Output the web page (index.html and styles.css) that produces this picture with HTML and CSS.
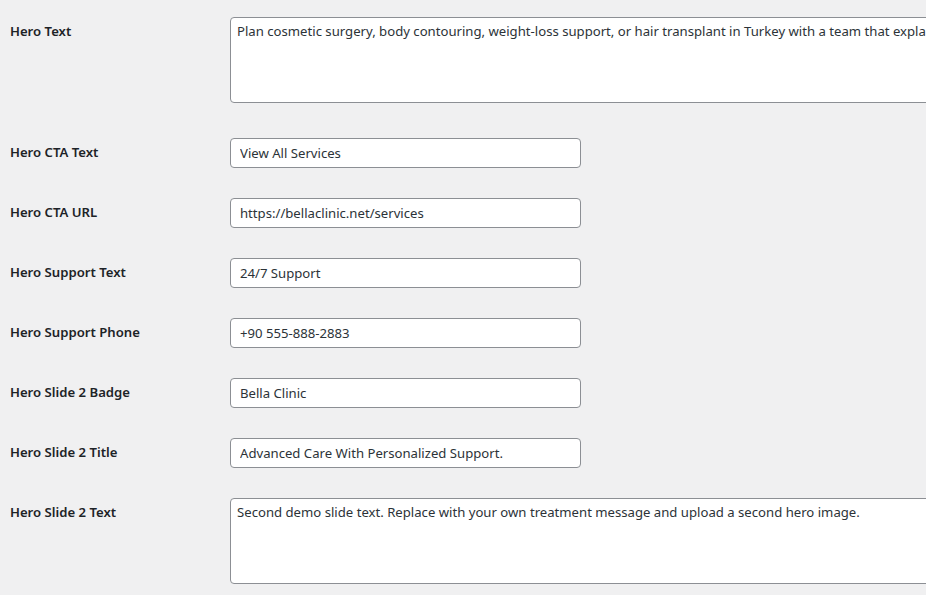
FILE: index.html
```html
<!DOCTYPE html>
<html>
<head>
<meta charset="utf-8">
<link rel="stylesheet" href="styles.css">
</head>
<body>
<div class="form">
  <div class="row row-area">
    <label class="lbl">Hero Text</label>
    <div class="field field-area"><textarea class="area">Plan cosmetic surgery, body contouring, weight-loss support, or hair transplant in Turkey with a team that explains every step clearly.</textarea></div>
  </div>
  <div class="row">
    <label class="lbl">Hero CTA Text</label>
    <div class="field"><input class="txt" type="text" value="View All Services"></div>
  </div>
  <div class="row">
    <label class="lbl">Hero CTA URL</label>
    <div class="field"><input class="txt" type="text" value="https://bellaclinic.net/services"></div>
  </div>
  <div class="row">
    <label class="lbl">Hero Support Text</label>
    <div class="field"><input class="txt" type="text" value="24/7 Support"></div>
  </div>
  <div class="row">
    <label class="lbl">Hero Support Phone</label>
    <div class="field"><input class="txt" type="text" value="+90 555-888-2883"></div>
  </div>
  <div class="row">
    <label class="lbl">Hero Slide 2 Badge</label>
    <div class="field"><input class="txt" type="text" value="Bella Clinic"></div>
  </div>
  <div class="row">
    <label class="lbl">Hero Slide 2 Title</label>
    <div class="field"><input class="txt" type="text" value="Advanced Care With Personalized Support."></div>
  </div>
  <div class="row row-area">
    <label class="lbl">Hero Slide 2 Text</label>
    <div class="field field-area"><textarea class="area">Second demo slide text. Replace with your own treatment message and upload a second hero image.</textarea></div>
  </div>
</div>
</body>
</html>
```

FILE: styles.css
```css
html, body {
  margin: 0;
  padding: 0;
  background: #f0f0f1;
  overflow: hidden;
}
body {
  font-family: "Noto Sans", "Open Sans", sans-serif;
  font-size: 13.15px;
  color: #1d2327;
}
.form {
  padding: 2px 0 0 10px;
  display: flex;
  flex-direction: column;
}
.row {
  display: flex;
  align-items: flex-start;
  height: 60px;
}
.row-area {
  height: 121px;
}
.lbl {
  width: 200px;
  padding: 20px 10px 0 0;
  line-height: 18px;
  font-weight: 600;
  font-size: 13.15px;
  flex-shrink: 0;
}
.field {
  padding: 15px 10px;
}
.field-area {
  flex: 1;
  min-width: 0;
  padding-right: 0;
  overflow: hidden;
}
.txt {
  box-sizing: border-box;
  width: 351px;
  height: 30px;
  margin: 0;
  padding: 0 9px;
  border: 1px solid #8c8f94;
  border-radius: 4px;
  background: #fff;
  color: #2c3338;
  font-family: inherit;
  font-size: 13.15px;
  line-height: 2;
  outline: none;
}
.area {
  display: block;
  box-sizing: border-box;
  width: 740px;
  height: 86px;
  margin: 0;
  padding: 4px 6px;
  border: 1px solid #8c8f94;
  border-radius: 4px;
  background: #fff;
  color: #2c3338;
  font-family: inherit;
  font-size: 13.15px;
  line-height: 1.4;
  resize: none;
  white-space: pre;
  overflow: hidden;
  outline: none;
}
```
